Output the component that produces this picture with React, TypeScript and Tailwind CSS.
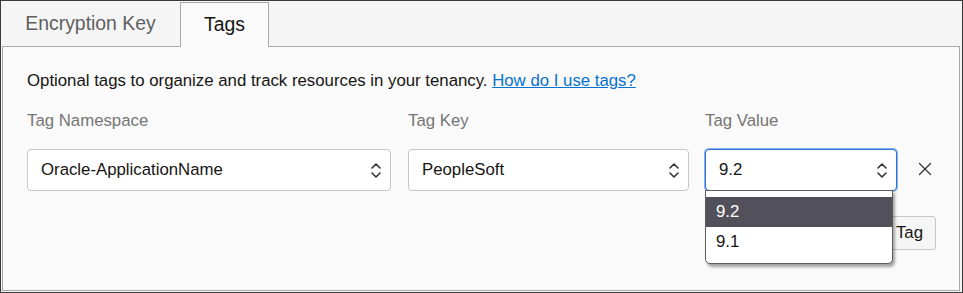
import { X } from "lucide-react";

const font = { fontFamily: '"Liberation Sans", Arial, sans-serif' };

function Chevrons() {
  return (
    <svg width="10" height="17" viewBox="0 0 10 17" fill="none" className="shrink-0">
      <path d="M1 6 L5 2 L9 6" stroke="#333" strokeWidth="1.6" strokeLinecap="round" strokeLinejoin="round" />
      <path d="M1 11 L5 15 L9 11" stroke="#333" strokeWidth="1.6" strokeLinecap="round" strokeLinejoin="round" />
    </svg>
  );
}

function SelectBox({
  value,
  className,
  focused,
}: {
  value: string;
  className: string;
  focused?: boolean;
}) {
  return (
    <div
      className={
        focused
          ? `h-[42px] flex items-center justify-between pl-[13px] pr-[9px] bg-white rounded-[4px] border border-[#2f74d0] shadow-[0_0_0_1px_#86b2ea] ${className}`
          : `h-[42px] flex items-center justify-between pl-[13px] pr-[9px] bg-white rounded-[4px] border border-[#c5c7cb] ${className}`
      }
    >
      <span className="text-[16.8px] text-[#161513]">{value}</span>
      <Chevrons />
    </div>
  );
}

export default function App() {
  const options = ["9.2", "9.1"];

  return (
    <div
      className="w-[963px] h-[293px] border border-[#3a3a3a] bg-[#f5f5f5] flex flex-col overflow-hidden"
      style={font}
    >
      {/* tab strip */}
      <div className="h-[45px] flex items-end shrink-0">
        <div className="w-[179px] h-[44px] flex items-center justify-center text-[19.4px] text-[#5f5f5f]">
          Encryption Key
        </div>
        <div className="relative z-10 w-[89px] h-[45px] mb-[-1px] flex items-center justify-center bg-[#fafafa] border border-b-0 border-[#a9a9a9] text-[19.4px] text-[#161513]">
          Tags
        </div>
      </div>

      {/* panel */}
      <div className="flex-1 ml-[1px] mr-[2px] mb-[1px] bg-[#fafafa] border border-[#a9a9a9] pl-[24px] pr-[23px] pt-[24px]">
        <p className="text-[16.8px] text-[#161513] leading-[20px]">
          Optional tags to organize and track resources in your tenancy.{" "}
          <a href="#" className="text-[#0572ce] underline">
            How do I use tags?
          </a>
        </p>

        <div className="mt-[20px] flex items-start">
          <div className="w-[364px] shrink-0 flex flex-col gap-[18px]">
            <span className="text-[16.8px] text-[#757575] leading-[20px]">Tag Namespace</span>
            <SelectBox value="Oracle-ApplicationName" className="w-full" />
          </div>
          <div className="w-[281px] shrink-0 ml-[17px] flex flex-col gap-[18px]">
            <span className="text-[16.8px] text-[#757575] leading-[20px]">Tag Key</span>
            <SelectBox value="PeopleSoft" className="w-full" />
          </div>
          <div className="relative w-[192px] shrink-0 ml-[16px] flex flex-col gap-[18px]">
            <span className="text-[16.8px] text-[#757575] leading-[20px]">Tag Value</span>
            <SelectBox value="9.2" className="w-full" focused />

            {/* open listbox */}
            <ul className="absolute z-20 left-[0px] top-[79px] w-[188px] h-[74px] bg-white border border-[#5d5d5d] rounded-b-[5px] py-[6px] shadow-[2px_3px_3px_rgba(0,0,0,0.35)]">
              {options.map((o, i) => (
                <li
                  key={o}
                  className={
                    i === 0
                      ? "h-[30px] flex items-center pl-[10px] text-[16.8px] bg-[#52515b] text-white"
                      : "h-[30px] flex items-center pl-[10px] text-[16.8px] text-[#161513]"
                  }
                >
                  {o}
                </li>
              ))}
            </ul>
          </div>
          <button className="mt-[41px] ml-[17px] w-[22px] h-[34px] shrink-0 flex items-center justify-center text-[#333]">
            <X size={22} strokeWidth={1.3} />
          </button>
        </div>

        <div className="flex justify-end mt-[25px]">
          <button className="h-[34px] px-[12px] bg-[#f5f5f5] border border-[#c8c8c8] rounded-[3px] text-[16.8px] text-[#161513]">
            Add Tag
          </button>
        </div>
      </div>
    </div>
  );
}
